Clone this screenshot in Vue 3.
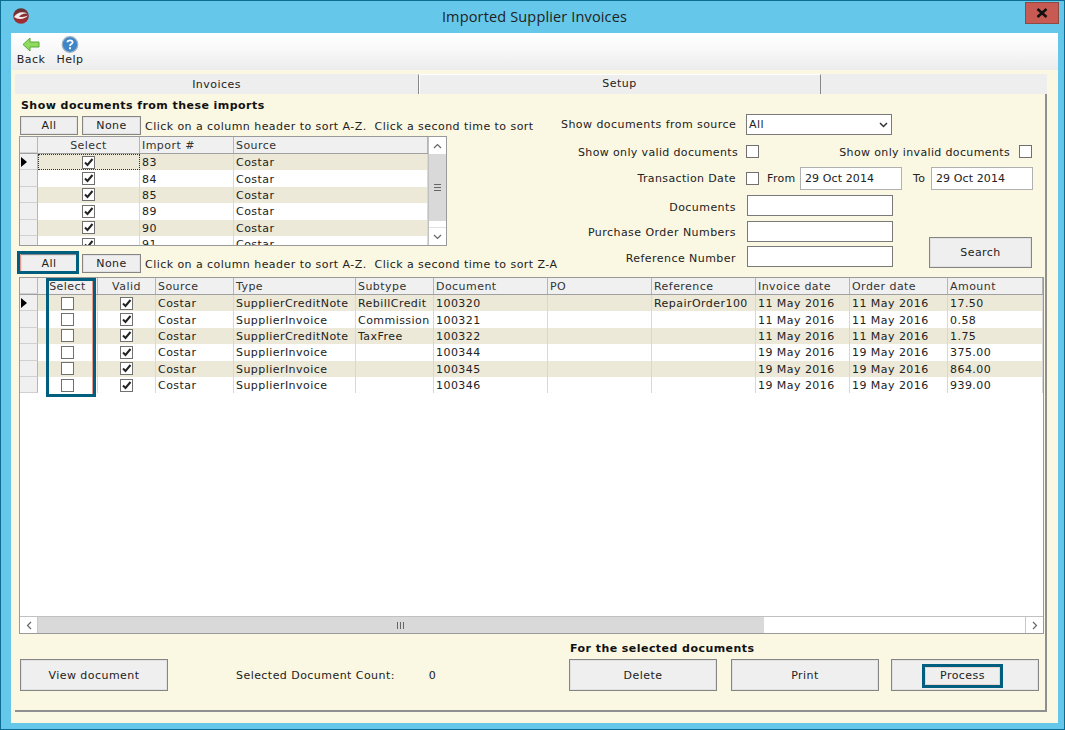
<script setup>
const imports = [
  { id: '83', source: 'Costar' },
  { id: '84', source: 'Costar' },
  { id: '85', source: 'Costar' },
  { id: '89', source: 'Costar' },
  { id: '90', source: 'Costar' },
  { id: '91', source: 'Costar' },
]

const docs = [
  { type: 'SupplierCreditNote', subtype: 'RebillCredit', doc: '100320', ref: 'RepairOrder100', date: '11 May 2016', amount: '17.50' },
  { type: 'SupplierInvoice', subtype: 'Commission', doc: '100321', ref: '', date: '11 May 2016', amount: '0.58' },
  { type: 'SupplierCreditNote', subtype: 'TaxFree', doc: '100322', ref: '', date: '11 May 2016', amount: '1.75' },
  { type: 'SupplierInvoice', subtype: '', doc: '100344', ref: '', date: '19 May 2016', amount: '375.00' },
  { type: 'SupplierInvoice', subtype: '', doc: '100345', ref: '', date: '19 May 2016', amount: '864.00' },
  { type: 'SupplierInvoice', subtype: '', doc: '100346', ref: '', date: '19 May 2016', amount: '939.00' },
]
</script>

<template>
  <div class="window">
    <div class="titlebar">
      <svg class="logo" width="18" height="18" viewBox="0 0 18 18">
        <defs>
          <linearGradient id="ball" x1="0" y1="0" x2="0" y2="1">
            <stop offset="0" stop-color="#5e3334" />
            <stop offset="0.5" stop-color="#8a3034" />
            <stop offset="1" stop-color="#a82a30" />
          </linearGradient>
        </defs>
        <circle cx="9" cy="9" r="7.8" fill="url(#ball)" />
        <path d="M2 10 C5 5.5 10 4 15.5 6.5 C11.5 6 8.5 7.5 7 9.5 C10 10.5 13 10 16 8.5 C13 12.5 6 13 2 10 Z" fill="#f4ecec" />
      </svg>
      <div class="title">Imported Supplier Invoices</div>
      <div class="close">
        <svg width="12" height="10" viewBox="0 0 12 10">
          <path d="M1.5 1 L10.5 9 M10.5 1 L1.5 9" stroke="#111" stroke-width="2.6" fill="none" />
        </svg>
      </div>
    </div>

    <div class="client">
      <div class="toolbar">
        <div class="tool">
          <svg width="18" height="15" viewBox="0 0 18 15">
            <path d="M8 1 L1 7.5 L8 14 V10 H17 V5 H8 Z" fill="#8fdc5c" stroke="#5aa83a" stroke-width="1" />
          </svg>
          <span>Back</span>
        </div>
        <div class="tool">
          <svg width="18" height="17" viewBox="0 0 18 17">
            <circle cx="9" cy="8.5" r="7.8" fill="#3f86c8" stroke="#9ab0c2" stroke-width="1.2" />
            <path d="M6.4 6.3 C6.6 3.6 11.6 3.6 11.6 6.3 C11.6 8.2 9 8 9 10" fill="none" stroke="#fff" stroke-width="1.8" />
            <rect x="8" y="11.2" width="2" height="2" fill="#fff" />
          </svg>
          <span>Help</span>
        </div>
      </div>

      <div class="tabs">
        <div class="tab tab-invoices">Invoices</div>
        <div class="tab tab-setup">Setup</div>
        <div class="tab tab-rest"></div>
      </div>

      <div class="panel">
        <div class="top">
          <div class="imports">
            <div class="heading">Show documents from these imports</div>
            <div class="btn-row">
              <button class="btn btn-all">All</button>
              <button class="btn btn-none">None</button>
              <span class="hint">Click on a column header to sort A-Z.&nbsp; Click a second time to sort</span>
            </div>

            <div class="grid-box imports-grid">
              <div class="grid-main">
                <div class="row head">
                  <div class="cell rh"></div>
                  <div class="cell center">Select</div>
                  <div class="cell">Import #</div>
                  <div class="cell">Source</div>
                </div>
                <div v-for="(r, i) in imports" :key="r.id" class="row" :class="{ alt: i % 2 === 0 }">
                  <div class="cell rh"><span v-if="i === 0" class="arrow"></span></div>
                  <div class="cell center" :class="{ focus: i === 0 }">
                    <span class="check on">
                      <svg width="11" height="11" viewBox="0 0 11 11"><path d="M2 5.5 L4.5 8 L9.5 2" fill="none" stroke="#222" stroke-width="2" /></svg>
                    </span>
                  </div>
                  <div class="cell">{{ r.id }}</div>
                  <div class="cell">{{ r.source }}</div>
                </div>
              </div>
              <div class="vscroll">
                <div class="sb-btn">
                  <svg width="9" height="6" viewBox="0 0 9 6"><path d="M1 5 L4.5 1.5 L8 5" fill="none" stroke="#666" stroke-width="1.2" /></svg>
                </div>
                <div class="v-thumb"><i></i><i></i><i></i></div>
                <div class="v-track"></div>
                <div class="sb-btn">
                  <svg width="9" height="6" viewBox="0 0 9 6"><path d="M1 1 L4.5 4.5 L8 1" fill="none" stroke="#666" stroke-width="1.2" /></svg>
                </div>
              </div>
            </div>

            <div class="btn-row second">
              <button class="btn btn-all marked">All</button>
              <button class="btn btn-none">None</button>
              <span class="hint">Click on a column header to sort A-Z.&nbsp; Click a second time to sort Z-A</span>
            </div>
          </div>

          <div class="filters">
            <div class="f-row source-row">
              <label class="f-label">Show documents from source</label>
              <div class="select">
                <span>All</span>
                <svg width="9" height="6" viewBox="0 0 9 6"><path d="M1 1 L4.5 4.5 L8 1" fill="none" stroke="#333" stroke-width="1.5" /></svg>
              </div>
            </div>
            <div class="f-row valid-row">
              <label class="f-label">Show only valid documents</label>
              <span class="check"></span>
              <label class="invalid-label">Show only invalid documents</label>
              <span class="check"></span>
            </div>
            <div class="f-row date-row">
              <label class="f-label">Transaction Date</label>
              <span class="check"></span>
              <label class="from">From</label>
              <div class="date">29 Oct 2014</div>
              <label class="to">To</label>
              <div class="date">29 Oct 2014</div>
            </div>
            <div class="search-wrap">
              <div class="inputs">
                <div class="f-row">
                  <label class="f-label low">Documents</label>
                  <div class="input"></div>
                </div>
                <div class="f-row">
                  <label class="f-label low">Purchase Order Numbers</label>
                  <div class="input"></div>
                </div>
                <div class="f-row">
                  <label class="f-label low">Reference Number</label>
                  <div class="input"></div>
                </div>
              </div>
              <button class="btn btn-search">Search</button>
            </div>
          </div>
        </div>

        <div class="grid-box docs-grid">
          <div class="docs-body">
            <div class="row head">
              <div class="cell rh"></div>
              <div class="cell center">Select</div>
              <div class="cell center">Valid</div>
              <div class="cell">Source</div>
              <div class="cell">Type</div>
              <div class="cell">Subtype</div>
              <div class="cell">Document</div>
              <div class="cell">PO</div>
              <div class="cell">Reference</div>
              <div class="cell">Invoice date</div>
              <div class="cell">Order date</div>
              <div class="cell">Amount</div>
            </div>
            <div v-for="(d, i) in docs" :key="d.doc" class="row" :class="{ alt: i % 2 === 0 }">
              <div class="cell rh"><span v-if="i === 0" class="arrow"></span></div>
              <div class="cell center"><span class="check"></span></div>
              <div class="cell center">
                <span class="check on">
                  <svg width="11" height="11" viewBox="0 0 11 11"><path d="M2 5.5 L4.5 8 L9.5 2" fill="none" stroke="#222" stroke-width="2" /></svg>
                </span>
              </div>
              <div class="cell">Costar</div>
              <div class="cell">{{ d.type }}</div>
              <div class="cell">{{ d.subtype }}</div>
              <div class="cell">{{ d.doc }}</div>
              <div class="cell"></div>
              <div class="cell">{{ d.ref }}</div>
              <div class="cell">{{ d.date }}</div>
              <div class="cell">{{ d.date }}</div>
              <div class="cell">{{ d.amount }}</div>
            </div>
            <div class="select-mark"></div>
          </div>
          <div class="hscroll">
            <div class="sb-btn h">
              <svg width="6" height="9" viewBox="0 0 6 9"><path d="M5 1 L1.5 4.5 L5 8" fill="none" stroke="#666" stroke-width="1.2" /></svg>
            </div>
            <div class="h-thumb"><i></i><i></i><i></i></div>
            <div class="h-track"></div>
            <div class="sb-btn h">
              <svg width="6" height="9" viewBox="0 0 6 9"><path d="M1 1 L4.5 4.5 L1 8" fill="none" stroke="#666" stroke-width="1.2" /></svg>
            </div>
          </div>
        </div>

        <div class="footer">
          <div class="foot-left">
            <button class="btn btn-wide">View document</button>
            <span class="count-label">Selected Document Count:</span>
            <span class="count">0</span>
          </div>
          <div class="foot-right">
            <div class="heading">For the selected documents</div>
            <div class="actions">
              <button class="btn btn-wide">Delete</button>
              <button class="btn btn-wide print">Print</button>
              <button class="btn btn-wide process"><span>Process</span></button>
            </div>
          </div>
        </div>
      </div>
    </div>
  </div>
</template>

<style>
html, body {
  margin: 0;
  background: #65c8ea;
  overflow: hidden;
}
</style>

<style scoped>
.window {
  box-sizing: border-box;
  width: 1065px;
  height: 730px;
  background: #65c8ea;
  border: 1px solid #0d6c92;
  display: flex;
  flex-direction: column;
  font-family: "DejaVu Sans", Verdana, sans-serif;
  font-size: 11px;
  letter-spacing: 0.45px;
  color: #222;
  overflow: hidden;
}

.titlebar {
  height: 32px;
  flex: none;
  position: relative;
}

.logo {
  position: absolute;
  left: 11px;
  top: 6px;
}

.title {
  text-align: center;
  font-family: "Open Sans", sans-serif;
  font-size: 14.5px;
  letter-spacing: 0.15px;
  line-height: 32px;
  color: #222;
  padding-left: 4px;
}

.close {
  position: absolute;
  right: 5px;
  top: 1px;
  width: 34px;
  height: 22px;
  background: #c75a52;
  border: 1px solid #8d4a45;
  box-sizing: border-box;
  display: flex;
  align-items: center;
  justify-content: center;
}

.client {
  margin: 0 6px 6px 10px;
  flex: 1;
  background: #faf7e2;
  display: flex;
  flex-direction: column;
  min-height: 0;
}

.toolbar {
  height: 37px;
  flex: none;
  box-sizing: border-box;
  display: flex;
  gap: 9px;
  padding: 3px 0 0 5px;
  background: linear-gradient(#ffffff, #f9f9f9 40%, #ececec);
}

.tool {
  display: flex;
  flex-direction: column;
  align-items: center;
  width: 30px;
  line-height: 13px;
  font-size: 11px;
}

.tool svg {
  height: 17px;
}

.tabs {
  margin: 4px 11px 0 4px;
  height: 20px;
  flex: none;
  display: flex;
  background: #eeeeee;
}

.tab {
  box-sizing: border-box;
  text-align: center;
  line-height: 21px;
  height: 20px;
}

.tab-invoices {
  width: 403px;
}

.tab-setup {
  width: 403px;
  border-left: 1px solid #888;
  border-right: 1px solid #888;
  border-top: 1px solid #fff;
  box-shadow: inset 1px 0 #fff;
  line-height: 18px;
}

.tab-rest {
  flex: 1;
}

.panel {
  margin: 0 11px 11px 4px;
  flex: 1;
  min-height: 0;
  box-sizing: border-box;
  border-right: 2px solid #8f8f8f;
  border-bottom: 2px solid #8f8f8f;
  padding: 4px 3px 0 4px;
  display: flex;
  flex-direction: column;
}

.top {
  display: grid;
  grid-template-columns: 539px 1fr;
}

.heading {
  font-weight: 700;
  line-height: 15px;
  height: 15px;
  color: #111;
  padding-left: 2px;
}

.foot-right .heading {
  padding-left: 1px;
}

.btn-row {
  display: flex;
  align-items: center;
  gap: 4px;
  margin-top: 3px;
  padding-left: 1px;
  height: 19px;
}

.btn-row.second {
  margin-top: 7px;
  height: 21px;
}

.hint {
  white-space: nowrap;
  font-size: 11px;
  padding-top: 1px;
}

.btn {
  box-sizing: border-box;
  font-family: inherit;
  font-size: 11px;
  letter-spacing: inherit;
  color: #222;
  background: #efefef;
  border: 1px solid #858585;
  box-shadow: inset 0 0 0 1px #e2e2e2;
  padding: 0;
  margin: 0;
  position: relative;
}

.btn-all {
  width: 58px;
  height: 19px;
}

.btn-none {
  width: 59px;
  height: 19px;
}

.btn.marked::after {
  content: "";
  position: absolute;
  left: -4px;
  right: -2px;
  top: -4px;
  bottom: -2px;
  border: 3px solid #005f7f;
  box-shadow: inset 1px 0 0 #e8998e;
}

.grid-box {
  background: #fff;
  border: 1px solid #9a9a9a;
  box-sizing: border-box;
  overflow: hidden;
}

.imports-grid {
  margin-top: 1px;
  width: 428px;
  height: 110px;
  display: flex;
}

.grid-main {
  flex: 1;
  min-width: 0;
  overflow: hidden;
}

.imports-grid .row {
  grid-template-columns: 18px 102px 94px 1fr;
}

.imports-grid .check {
  margin-top: -2px;
}

.docs-grid .row {
  grid-template-columns: 18px 60px 58px 78px 122px 78px 114px 104px 104px 94px 98px 1fr;
}

.row {
  display: grid;
  height: 16.4px;
  background: #fff;
}

.row.alt {
  background: #ece9d8;
}

.row.head {
  background: #f0f0f0;
  height: 16px;
  border-bottom: 1px solid #a0a0a0;
}

.cell {
  box-sizing: border-box;
  padding-left: 2px;
  padding-top: 2px;
  line-height: 16px;
  white-space: nowrap;
  overflow: hidden;
  border-right: 1px solid #d8d8d8;
  display: flex;
  align-items: center;
  min-width: 0;
}

.row.head .cell {
  border-right-color: #b5b5b5;
  color: #333;
}

.cell.center {
  justify-content: center;
  padding-left: 0;
}

.cell.rh {
  background: #f0f0f0;
  border-right: 1px solid #b5b5b5;
  border-bottom: 1px solid #d0d0d0;
  padding-left: 1px;
  padding-top: 0;
}

.cell.focus {
  outline: 1px dotted #333;
  outline-offset: -1px;
}

.arrow {
  width: 0;
  height: 0;
  border-left: 6px solid #000;
  border-top: 5px solid transparent;
  border-bottom: 5px solid transparent;
}

.check {
  box-sizing: border-box;
  display: inline-flex;
  align-items: center;
  justify-content: center;
  flex: none;
  width: 13px;
  height: 13px;
  background: #fff;
  border: 1px solid #707070;
}

.docs-body .check {
  margin-top: -2px;
}

.vscroll {
  width: 17px;
  flex: none;
  display: flex;
  flex-direction: column;
  border-left: 1px solid #c0c0c0;
}

.sb-btn {
  height: 17px;
  flex: none;
  display: flex;
  align-items: center;
  justify-content: center;
  background: #fff;
}

.v-thumb {
  height: 67px;
  flex: none;
  background: #d9d9d9;
  display: flex;
  flex-direction: column;
  align-items: center;
  justify-content: center;
  gap: 1px;
}

.v-thumb i {
  width: 7px;
  height: 1px;
  background: #666;
  margin-bottom: 1px;
}

.v-track {
  flex: 1;
  background: #fff;
  border-bottom: 1px solid #e0e0e0;
}

.filters {
  padding-left: 3px;
  min-width: 0;
}

.f-row {
  display: flex;
  align-items: center;
}

.f-label {
  width: 175px;
  flex: none;
  text-align: right;
  margin-right: 10px;
  white-space: nowrap;
}

.f-label.low {
  padding-top: 3px;
  margin-right: 11px;
}

.source-row {
  height: 21px;
  margin-top: 16px;
}

.select {
  box-sizing: border-box;
  width: 146px;
  height: 21px;
  background: #fff;
  border: 1px solid #7a7a7a;
  display: flex;
  align-items: center;
  justify-content: space-between;
  padding: 0 3px 0 2px;
}

.valid-row {
  margin-top: 9px;
  height: 15px;
  letter-spacing: 0.36px;
}

.valid-row .f-label {
  width: 177px;
  margin-right: 8px;
  padding-top: 1px;
}

.invalid-label {
  width: 251px;
  flex: none;
  text-align: right;
  margin-right: 9px;
  white-space: nowrap;
  padding-top: 1px;
}

.date-row {
  margin-top: 8px;
  height: 23px;
  letter-spacing: 0.36px;
}

.from {
  width: 33px;
  flex: none;
  margin-left: 8px;
}

.date {
  box-sizing: border-box;
  width: 102px;
  height: 23px;
  line-height: 21px;
  padding-left: 4px;
  background: #fff;
  border: 1px solid #b0b0b0;
  letter-spacing: 0.1px;
}

.to {
  width: 18px;
  flex: none;
  margin-left: 11px;
}

.search-wrap {
  display: flex;
  align-items: flex-end;
  margin-top: 5px;
}

.inputs {
  display: flex;
  flex-direction: column;
  gap: 4.5px;
}

.input {
  box-sizing: border-box;
  width: 146px;
  height: 21px;
  background: #fff;
  border: 1px solid #7a7a7a;
}

.btn-search {
  width: 103px;
  height: 31px;
  margin-left: 36px;
  margin-bottom: -1px;
}

.docs-grid {
  margin-top: 3px;
  width: 1025px;
  height: 357px;
  display: flex;
  flex-direction: column;
}

.docs-body {
  flex: 1;
  min-height: 0;
  position: relative;
}

.select-mark {
  position: absolute;
  left: 26px;
  top: 0;
  width: 50px;
  height: 119px;
  box-sizing: border-box;
  border: 3px solid #005f7f;
  box-shadow: inset -1px 0 0 #e8998e;
}

.hscroll {
  height: 16px;
  flex: none;
  display: flex;
  border-top: 1px solid #c0c0c0;
}

.sb-btn.h {
  width: 17px;
  height: auto;
  border-right: 1px solid #c8c8c8;
}

.hscroll .sb-btn.h:last-child {
  border-right: 0;
  border-left: 1px solid #c8c8c8;
}

.h-thumb {
  width: 726px;
  flex: none;
  background: #d9d9d9;
  display: flex;
  align-items: center;
  justify-content: center;
  gap: 1px;
}

.h-thumb i {
  width: 1px;
  height: 7px;
  background: #666;
  margin-right: 1px;
}

.h-track {
  flex: 1;
  background: #fff;
}

.footer {
  display: flex;
  justify-content: space-between;
  align-items: flex-end;
  margin-top: 7px;
  padding-left: 1px;
}

.foot-left {
  display: flex;
  align-items: center;
}

.btn-wide {
  width: 148px;
  height: 32px;
}

.count-label {
  margin-left: 68px;
}

.count {
  margin-left: 34px;
}

.foot-right {
  width: 470px;
  margin-right: 3px;
}

.actions {
  display: flex;
  gap: 13px;
  margin-top: 3px;
}

.print {
  left: 1px;
}

.process span {
  position: absolute;
  left: 30px;
  right: 35px;
  top: 4px;
  bottom: 2px;
  padding-bottom: 2px;
  box-sizing: border-box;
  border: 3px solid #005f7f;
  box-shadow: inset 0 0 0 1px #e9d4d0;
  display: flex;
  align-items: center;
  justify-content: center;
}
</style>
